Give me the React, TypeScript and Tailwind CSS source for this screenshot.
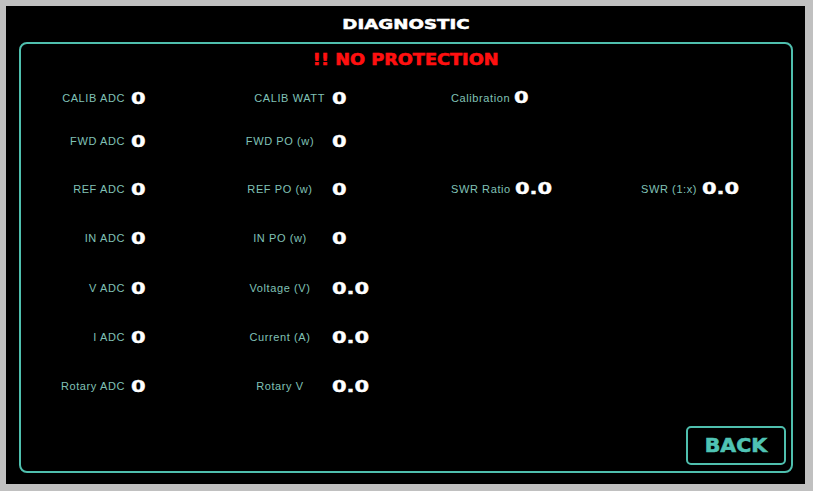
import React from "react";

type Cell = { label: string; value: string; align?: "center" | "right" };
type Row = {
  mt: string;
  c1: Cell;
  c2: Cell;
  c3?: Cell;
  c4?: Cell;
};

const rows: Row[] = [
  { mt: "mt-[18px]", c1: { label: "CALIB ADC", value: "0" }, c2: { label: "CALIB WATT", value: "0", align: "right" }, c3: { label: "Calibration", value: "0" } },
  { mt: "mt-[23px]", c1: { label: "FWD ADC", value: "0" }, c2: { label: "FWD PO (w)", value: "0" } },
  { mt: "mt-[28px]", c1: { label: "REF ADC", value: "0" }, c2: { label: "REF PO (w)", value: "0" }, c3: { label: "SWR Ratio", value: "0.0" }, c4: { label: "SWR (1:x)", value: "0.0" } },
  { mt: "mt-[29px]", c1: { label: "IN ADC", value: "0" }, c2: { label: "IN PO (w)", value: "0" } },
  { mt: "mt-[30px]", c1: { label: "V ADC", value: "0" }, c2: { label: "Voltage (V)", value: "0.0" } },
  { mt: "mt-[29px]", c1: { label: "I ADC", value: "0" }, c2: { label: "Current (A)", value: "0.0" } },
  { mt: "mt-[29px]", c1: { label: "Rotary ADC", value: "0" }, c2: { label: "Rotary V", value: "0.0" } },
];

const labelCls =
  "text-[11px] leading-none tracking-[0.6px] text-[#80c2b7] whitespace-nowrap [font-family:'Liberation_Sans',Arial,sans-serif]";

function Value({ v }: { v: string }) {
  return (
    <span className="inline-block origin-left scale-x-[1.4] text-[15px] font-bold leading-none text-white whitespace-nowrap [-webkit-text-stroke:0.35px_white] [font-family:'DejaVu_Sans',sans-serif]">
      {v}
    </span>
  );
}

export default function App() {
  return (
    <div className="w-[813px] h-[491px] bg-[#c0c0c0] pt-[6px] pl-[6px] pr-[8px] pb-[7px]">
      <div className="w-full h-full bg-black flex flex-col">
        <div className="h-[36px] flex items-center justify-center">
          <span className="inline-block scale-x-[1.3] text-[14px] font-bold leading-none text-white [-webkit-text-stroke:0.5px_white] [font-family:'DejaVu_Sans',sans-serif]">
            DIAGNOSTIC
          </span>
        </div>
        <div className="ml-[13px] mr-[12px] mb-[11px] flex-1 border-2 border-[#4fbfae] rounded-[8px] flex flex-col">
          <div className="h-[20px] mt-[6px] flex items-center justify-center">
            <span className="inline-block scale-x-[1.18] text-[15px] font-bold leading-none text-[#ff1010] [-webkit-text-stroke:0.6px_#ff1010] [font-family:'DejaVu_Sans',sans-serif]">
              !! NO PROTECTION
            </span>
          </div>
          {rows.map((r, i) => (
            <div key={i} className={`${r.mt} h-[20px] flex items-center`}>
              <div className="w-[104px] flex justify-end">
                <span className={labelCls}>{r.c1.label}</span>
              </div>
              <div className="w-[110px] pl-[6px]">
                <Value v={r.c1.value} />
              </div>
              <div className={`w-[90px] flex ${r.c2.align === "right" ? "justify-end" : "justify-center"}`}>
                <span className={labelCls}>{r.c2.label}</span>
              </div>
              <div className="w-[126px] pl-[7px]">
                <Value v={r.c2.value} />
              </div>
              <div className="w-[190px] flex items-center gap-[4px]">
                {r.c3 && (
                  <>
                    <span className={labelCls}>{r.c3.label}</span>
                    <Value v={r.c3.value} />
                  </>
                )}
              </div>
              <div className="flex items-center gap-[5px]">
                {r.c4 && (
                  <>
                    <span className={labelCls}>{r.c4.label}</span>
                    <Value v={r.c4.value} />
                  </>
                )}
              </div>
            </div>
          ))}
          <div className="mt-auto mb-[6px] mr-[5px] flex justify-end">
            <button className="w-[100px] h-[39px] border-2 border-[#4fbfae] rounded-[5px] flex items-center justify-center">
              <span className="inline-block scale-x-[1.08] text-[19px] font-bold leading-none text-[#4fc3b4] [-webkit-text-stroke:0.6px_#4fc3b4] [font-family:'DejaVu_Sans',sans-serif]">
                BACK
              </span>
            </button>
          </div>
        </div>
      </div>
    </div>
  );
}
